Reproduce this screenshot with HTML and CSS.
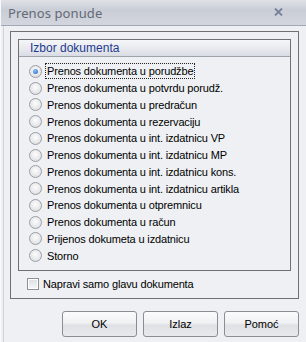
FILE: index.html
```html
<!DOCTYPE html>
<html lang="sr">
<head>
    <meta charset="UTF-8">
    <meta name="viewport" content="width=device-width, initial-scale=1.0">
    <title>Prenos ponude</title>
    <link rel="stylesheet" href="styles.css">
</head>
<body>
    <div class="window">
        <div class="titlebar">
            <span class="title">Prenos ponude</span>
            <svg class="close" width="9" height="8" viewBox="0 0 9 8">
                <path d="M1 0.5 L8 7.5 M8 0.5 L1 7.5" stroke="#75809a" stroke-width="1.8"/>
            </svg>
        </div>

        <div class="outer">
            <div class="group">
                <div class="group-head">Izbor dokumenta</div>
                <div class="options">
                    <label class="option"><span class="radio checked"></span><span class="text focus">Prenos dokumenta u porudžbe</span></label>
                    <label class="option"><span class="radio"></span><span class="text">Prenos dokumenta u potvrdu porudž.</span></label>
                    <label class="option"><span class="radio"></span><span class="text">Prenos dokumenta u predračun</span></label>
                    <label class="option"><span class="radio"></span><span class="text">Prenos dokumenta u rezervaciju</span></label>
                    <label class="option"><span class="radio"></span><span class="text">Prenos dokumenta u int. izdatnicu VP</span></label>
                    <label class="option"><span class="radio"></span><span class="text">Prenos dokumenta u int. izdatnicu MP</span></label>
                    <label class="option"><span class="radio"></span><span class="text">Prenos dokumenta u int. izdatnicu kons.</span></label>
                    <label class="option"><span class="radio"></span><span class="text">Prenos dokumenta u int. izdatnicu artikla</span></label>
                    <label class="option"><span class="radio"></span><span class="text">Prenos dokumenta u otpremnicu</span></label>
                    <label class="option"><span class="radio"></span><span class="text">Prenos dokumenta u račun</span></label>
                    <label class="option"><span class="radio"></span><span class="text">Prijenos dokumeta u izdatnicu</span></label>
                    <label class="option"><span class="radio"></span><span class="text">Storno</span></label>
                </div>
            </div>
            <label class="check-row"><span class="checkbox"></span><span class="text">Napravi samo glavu dokumenta</span></label>
        </div>

        <div class="buttons">
            <button>OK</button>
            <button>Izlaz</button>
            <button>Pomoć</button>
        </div>
    </div>
</body>
</html>
```

FILE: styles.css
```css
body {
    margin: 0;
    font-family: "Liberation Sans", Tahoma, sans-serif;
    font-size: 11px;
    color: #000;
    background-color: #eef0f3;
}
.window {
    width: 306px;
    height: 342px;
    box-sizing: border-box;
    border-left: 1px solid #f8f9fa;
    position: relative;
    overflow: hidden;
}
.window::before {
    content: "";
    position: absolute;
    left: 2px;
    top: 26px;
    bottom: 0;
    width: 1px;
    background: #cfd2d8;
}
.titlebar {
    height: 25px;
    border-bottom: 1px solid #a3a7b1;
    background: linear-gradient(#dfe1e6, #c9cdd6 40%, #d3d6de);
    display: flex;
    align-items: center;
    justify-content: space-between;
    padding: 0 23px 0 7px;
}
.title {
    font-size: 13px;
    color: #646976;
    font-family: "Noto Sans", "DejaVu Sans", sans-serif;
    letter-spacing: 0.1px;
}
.close {
    margin-top: -1px;
}
.outer {
    margin: 5px 0 0 9px;
    width: 289px;
    height: 268px;
    box-sizing: border-box;
    border: 1px solid #707070;
    padding: 7px;
}
.group {
    height: 232px;
    box-sizing: border-box;
    border: 1px solid #707070;
}
.group-head {
    height: 16px;
    border-bottom: 1px solid #9da2ab;
    background: linear-gradient(#f5f6f8, #e6e8ed 60%, #d9dce3);
    color: #1d3a8f;
    font-size: 12px;
    line-height: 16px;
    padding-left: 11px;
}
.options {
    padding-top: 6px;
    display: flex;
    flex-direction: column;
}
.option {
    height: 16.75px;
    display: flex;
    align-items: center;
    padding-left: 10px;
}
.radio {
    width: 11px;
    height: 11px;
    border-radius: 50%;
    border: 1px solid #9c9ea3;
    background: radial-gradient(circle at 50% 40%, #fdfdfd, #d6d8dc);
    margin-right: 3px;
    position: relative;
    flex: none;
}
.radio.checked::after {
    content: "";
    position: absolute;
    left: 3px;
    top: 3px;
    width: 5px;
    height: 5px;
    border-radius: 50%;
    background: radial-gradient(circle at 40% 35%, #8cc4f6, #1f62c3);
}
.text {
    white-space: nowrap;
    padding: 0 1px;
    border: 1px dotted transparent;
    line-height: 14px;
    letter-spacing: -0.15px;
}
.text.focus {
    border-color: #222;
}
.check-row {
    display: flex;
    align-items: center;
    margin-top: 5px;
    padding-left: 9px;
}
.checkbox {
    width: 10px;
    height: 10px;
    border: 1px solid #8e8f93;
    background: linear-gradient(#dcdee2, #f7f7f8);
    box-shadow: inset 0 0 0 1px #fff;
    margin-right: 2px;
    flex: none;
}
.buttons {
    display: flex;
    gap: 6px;
    justify-content: flex-end;
    padding: 12px 7px 0 0;
}
button {
    width: 75px;
    height: 26px;
    border: 1px solid #8a8d93;
    border-radius: 3px;
    background: linear-gradient(#fbfbfc, #f0f1f3 45%, #dfe1e5 55%, #e8e9ec);
    font-family: "Liberation Sans", Tahoma, sans-serif;
    font-size: 11px;
    color: #000;
    padding: 0;
}
```
